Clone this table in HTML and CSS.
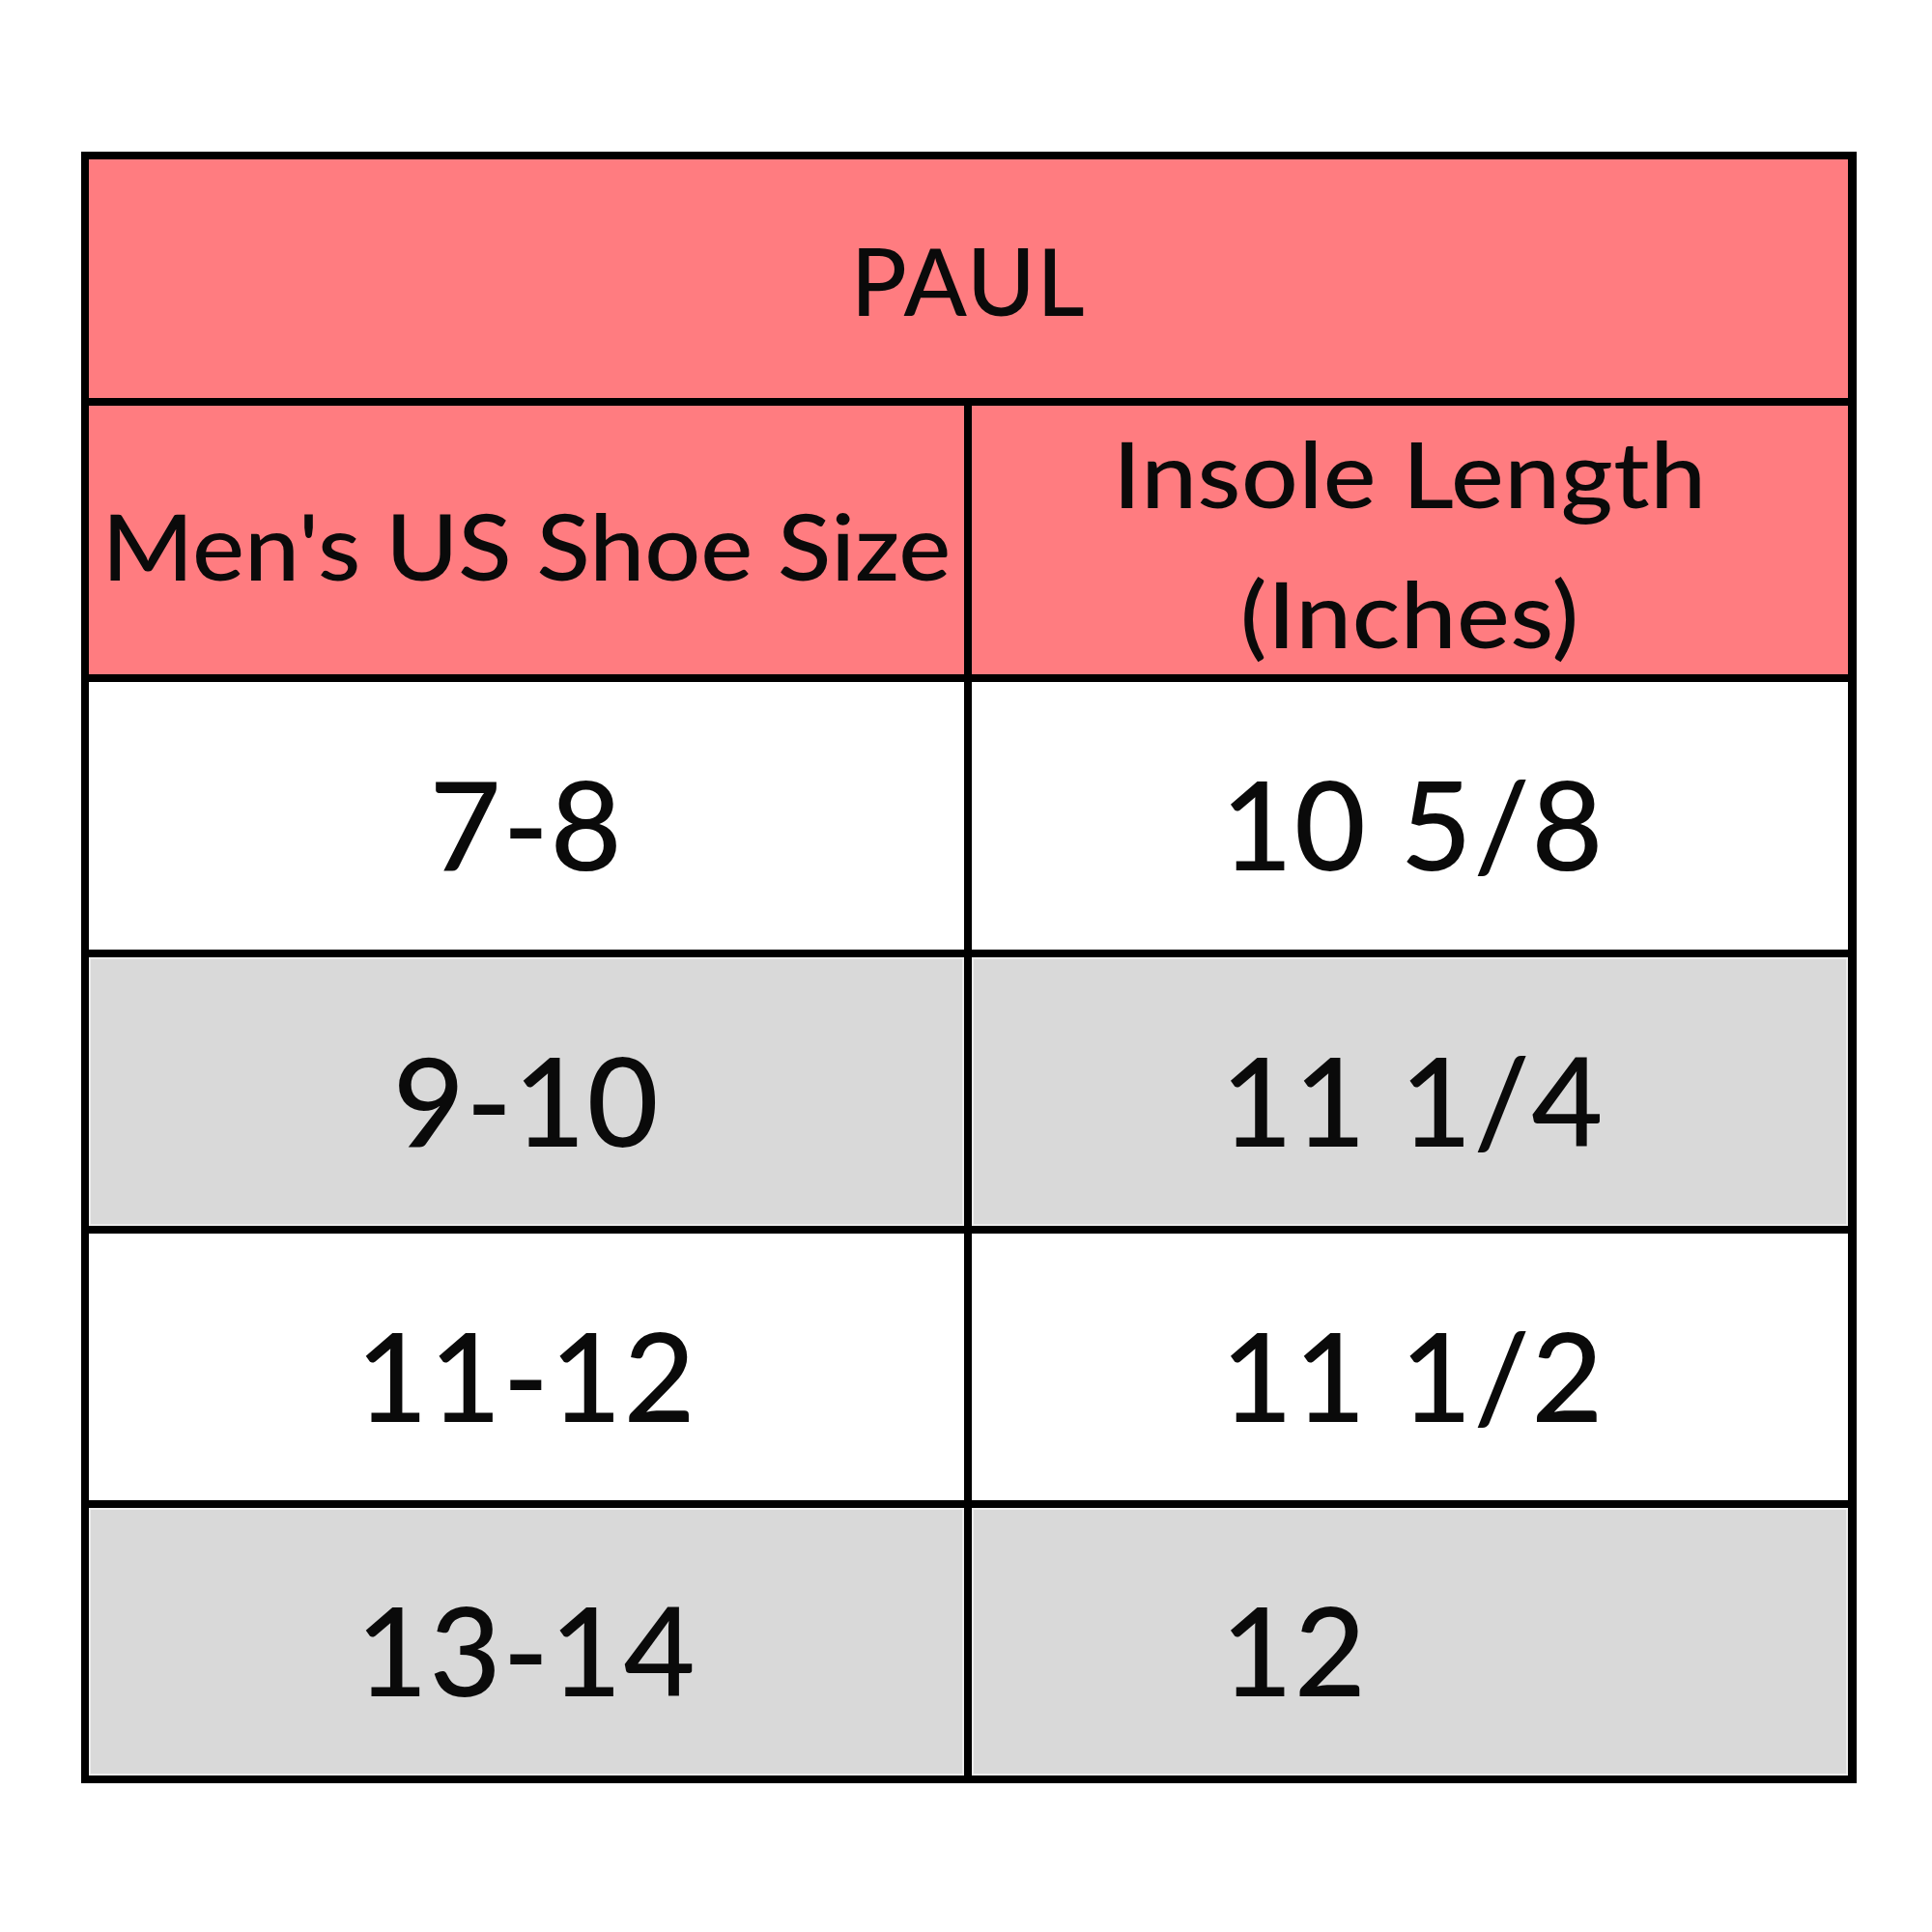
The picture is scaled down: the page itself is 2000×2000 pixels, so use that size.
FILE: index.html
```html
<!DOCTYPE html>
<html>
<head>
<meta charset="utf-8">
<link rel="stylesheet" href="styles.css">
</head>
<body>
<div class="page">
  <div class="chart">
    <div class="cell title">PAUL</div>
    <div class="cell head"><span class="wide">Men's US Shoe Size</span></div>
    <div class="cell head head-2"><span class="wide wider">Insole Length<br>(Inches)</span></div>
    <div class="cell data">7-8</div>
    <div class="cell data val">10 5/8</div>
    <div class="cell data alt">9-10</div>
    <div class="cell data alt val">11 1/4</div>
    <div class="cell data">11-12</div>
    <div class="cell data val">11 1/2</div>
    <div class="cell data alt">13-14</div>
    <div class="cell data alt val">12</div>
  </div>
</div>
</body>
</html>
```
FILE: styles.css
```css
html, body {
  margin: 0;
  padding: 0;
  background: #ffffff;
}
.page {
  width: 2000px;
  height: 2000px;
  padding: 157px 0 0 84px;
  box-sizing: border-box;
}
.chart {
  display: grid;
  grid-template-columns: 906px 907px;
  grid-template-rows: 247px 278px 277px 278px 276px 277px;
  gap: 8px;
  padding: 8px;
  background: #000000;
  width: 1838px;
  box-sizing: border-box;
  font-family: "Lato", "Liberation Sans", sans-serif;
  font-weight: 500;
  color: #0a0a0a;
}
.cell {
  display: flex;
  align-items: center;
  justify-content: center;
  text-align: center;
  box-sizing: border-box;
  background: #ffffff;
}
.title {
  grid-column: 1 / span 2;
  background: #ff7c80;
  font-size: 96px;
  letter-spacing: 1.5px;
  padding-top: 2px;
}
.head {
  background: #ff7c80;
  font-size: 94px;
  padding-top: 10px;
  white-space: nowrap;
}
.head-2 {
  line-height: 145px;
  padding-top: 6px;
}
.wide {
  display: inline-block;
  transform: scaleX(1.085);
}
.wider {
  transform: scaleX(1.1);
  letter-spacing: 0.5px;
}
.data {
  font-size: 128px;
  letter-spacing: 1.6px;
  padding-top: 14px;
}
.val {
  justify-content: flex-start;
  padding-left: 258px;
}
.alt {
  background: #d9d9d9;
  box-shadow: inset 0 0 0 2px #ececec;
}
```
